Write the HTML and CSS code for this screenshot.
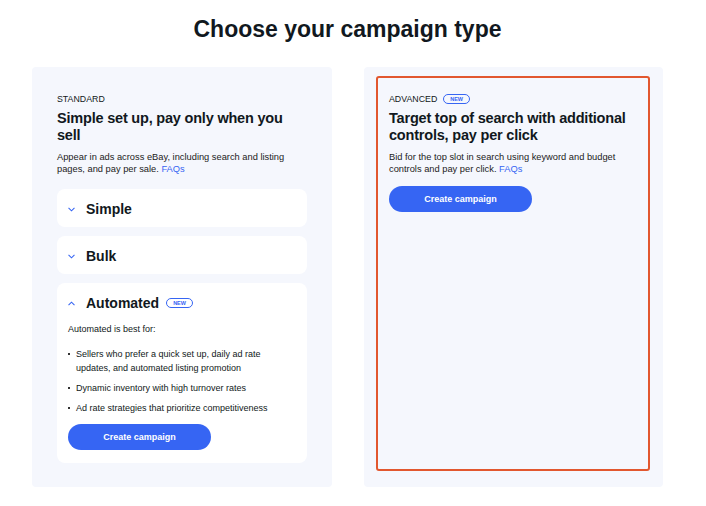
FILE: index.html
```html
<html>
  <head>
    <title>Choose your campaign type</title>
    <link rel="stylesheet" href="styles.css">
  </head>
  <body>
    <div class="page">
      <h1 class="title">Choose your campaign type</h1>
      <div class="types">
        <section class="panel">
          <div class="label">STANDARD</div>
          <h2 class="heading">Simple set up, pay only when you sell</h2>
          <p class="desc">Appear in ads across eBay, including search and listing pages, and pay per sale. <a href="#">FAQs</a></p>
          <div class="items">
            <div class="item">
              <div class="item-head">
                <svg class="chev" viewBox="0 0 8 5"><path d="M0.6 0.6 L4 4 L7.4 0.6" /></svg>
                <span>Simple</span>
              </div>
            </div>
            <div class="item">
              <div class="item-head">
                <svg class="chev" viewBox="0 0 8 5"><path d="M0.6 0.6 L4 4 L7.4 0.6" /></svg>
                <span>Bulk</span>
              </div>
            </div>
            <div class="item item-open">
              <div class="item-head">
                <svg class="chev" viewBox="0 0 8 5"><path d="M0.6 4.4 L4 1 L7.4 4.4" /></svg>
                <span>Automated</span>
                <span class="badge">NEW</span>
              </div>
              <p class="item-text">Automated is best for:</p>
              <ul class="list">
                <li>Sellers who prefer a quick set up, daily ad rate updates, and automated listing promotion</li>
                <li>Dynamic inventory with high turnover rates</li>
                <li>Ad rate strategies that prioritize competitiveness</li>
              </ul>
              <button class="btn">Create campaign</button>
            </div>
          </div>
        </section>
        <section class="panel panel-adv">
          <div class="selected">
            <div class="label">ADVANCED <span class="badge">NEW</span></div>
            <h2 class="heading">Target top of search with additional controls, pay per click</h2>
            <p class="desc">Bid for the top slot in search using keyword and budget controls and pay per click. <a href="#">FAQs</a></p>
            <button class="btn">Create campaign</button>
          </div>
        </section>
      </div>
    </div>
  </body>
</html>
```

FILE: styles.css
```css
body {
  margin: 0;
  background: #fff;
  color: #111820;
  font-family: "Liberation Sans", Arial, sans-serif;
}
.page {
  width: 695px;
}
.title {
  margin: 0;
  padding-top: 15px;
  height: 52px;
  box-sizing: border-box;
  text-align: center;
  font-size: 23px;
  line-height: 28px;
  font-weight: bold;
}
.types {
  display: grid;
  grid-template-columns: 300px 299px;
  gap: 32px;
  padding-left: 32px;
  margin-top: 15px;
}
.panel {
  background: #f5f7fd;
  border-radius: 4px;
  padding: 25px 25px 24px;
}
.panel-adv {
  padding: 9px 13px 16px 12px;
}
.selected {
  height: 100%;
  box-sizing: border-box;
  border: 2px solid #e2572f;
  border-radius: 3px;
  padding: 14px 11px;
}
.label {
  font-size: 8.8px;
  line-height: 14px;
  display: flex;
  align-items: center;
  gap: 6px;
}
.heading {
  margin: 4px 0 0;
  font-size: 14.5px;
  line-height: 17px;
  letter-spacing: -0.2px;
  font-weight: bold;
}
.desc {
  margin: 7px 0 0;
  font-size: 9.3px;
  line-height: 12px;
  color: #222;
}
.desc a {
  color: #3665f3;
  text-decoration: none;
}
.items {
  display: flex;
  flex-direction: column;
  gap: 9px;
  margin-top: 14px;
}
.item {
  background: #fff;
  border-radius: 8px;
  padding: 10px 11px 8px;
}
.item-open {
  padding-bottom: 13px;
}
.item-head {
  display: flex;
  align-items: center;
  height: 20px;
  font-size: 14px;
  font-weight: bold;
}
.chev {
  width: 7px;
  height: 5px;
  margin-right: 11px;
  fill: none;
  stroke: #3665f3;
  stroke-width: 1.2;
}
.badge {
  display: inline-block;
  margin-left: 7px;
  padding: 0 6px;
  border: 1px solid #3665f3;
  border-radius: 6px;
  color: #3665f3;
  font-size: 5.5px;
  line-height: 8px;
  font-weight: bold;
}
.label .badge {
  margin-left: 0;
}
.item-text {
  margin: 10px 0 0;
  font-size: 9px;
  line-height: 12px;
}
.list {
  margin: 12px 0 0;
  padding-left: 8px;
  font-size: 9px;
  line-height: 14px;
  list-style: none;
}
.list li {
  position: relative;
  margin-bottom: 6px;
}
.list li::before {
  content: "";
  position: absolute;
  left: -8px;
  top: 6px;
  width: 2px;
  height: 2px;
  background: #333;
}
.btn {
  display: block;
  width: 143px;
  height: 26px;
  margin-top: 9px;
  border: 0;
  border-radius: 13px;
  background: #3665f3;
  color: #fff;
  font-family: "Liberation Sans", Arial, sans-serif;
  font-size: 9px;
  font-weight: bold;
}
.selected .btn {
  margin-top: 11px;
}
```
